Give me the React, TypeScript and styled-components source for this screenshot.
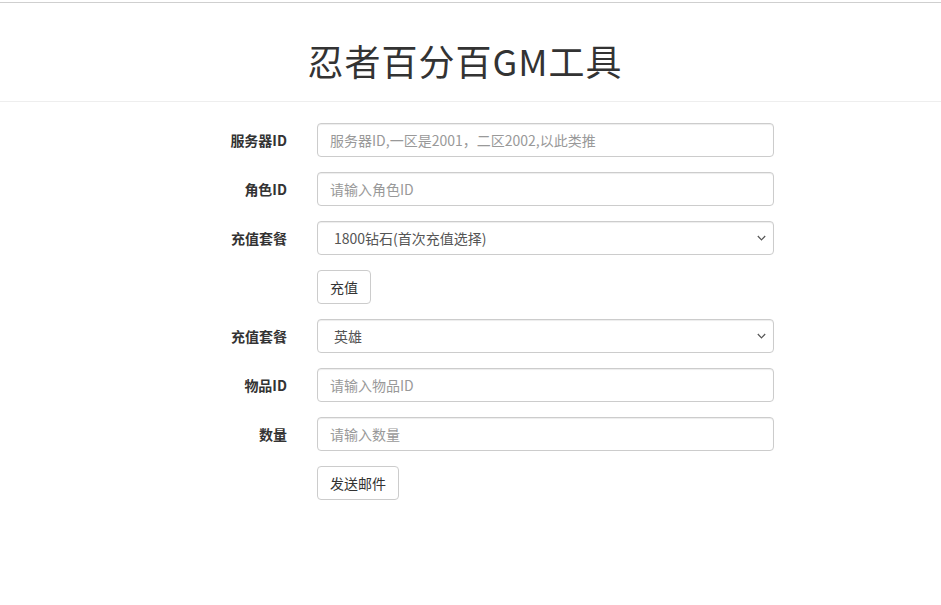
import styled, { createGlobalStyle } from 'styled-components';

const GlobalStyle = createGlobalStyle`
  html, body {
    margin: 0;
    padding: 0;
    background: #fff;
  }
  body {
    font-family: "Helvetica Neue", "Liberation Sans", "Noto Sans CJK SC", sans-serif;
    font-size: 14px;
    line-height: 1.42857;
    color: #333;
  }
  * {
    box-sizing: border-box;
  }
`;

const Page = styled.div`
  padding-top: 2px;
`;

const Header = styled.header`
  height: 100px;
  border-top: 1px solid #cfcfcf;
  border-bottom: 1px solid #eee;
  display: flex;
  justify-content: center;
  padding: 38px 11px 0 0;
`;

const Title = styled.h1`
  margin: 0;
  font-family: "Noto Sans CJK SC", sans-serif;
  font-size: 36px;
  font-weight: 400;
  line-height: 1.1;
  letter-spacing: 1px;
  color: #333;
`;

const Form = styled.form`
  margin: 21px 0 0 115px;
  width: 659px;
`;

const Row = styled.div`
  display: grid;
  grid-template-columns: 172px 457px;
  column-gap: 30px;
  align-items: center;
  margin-bottom: 15px;
`;

const Label = styled.label`
  text-align: right;
  font-family: "Noto Sans CJK SC", sans-serif;
  font-weight: 700;
  font-size: 14px;
  color: #333;
`;

const Field = styled.input`
  grid-column: 2;
  display: block;
  width: 100%;
  height: 34px;
  padding: 6px 12px;
  font-family: "Noto Sans CJK SC", sans-serif;
  font-size: 14px;
  color: #555;
  background: #fff;
  border: 1px solid #ccc;
  border-radius: 4px;
  box-shadow: inset 0 1px 1px rgba(0, 0, 0, 0.075);
  outline: none;

  &::placeholder {
    color: #999;
  }
`;

const chevron =
  "url(\"data:image/svg+xml;utf8,<svg xmlns='http://www.w3.org/2000/svg' width='9' height='6' viewBox='0 0 9 6'><path d='M0.8 1 L4.5 4.8 L8.2 1' fill='none' stroke='%23555' stroke-width='1.2'/></svg>\")";

const Select = styled.select`
  grid-column: 2;
  display: block;
  width: 100%;
  height: 34px;
  padding: 6px 28px 6px 16px;
  font-family: "Noto Sans CJK SC", sans-serif;
  font-size: 14px;
  color: #555;
  background: #fff ${chevron} no-repeat right 7px center;
  border: 1px solid #ccc;
  border-radius: 4px;
  box-shadow: inset 0 1px 1px rgba(0, 0, 0, 0.075);
  outline: none;
  appearance: none;
  -webkit-appearance: none;
`;

const Button = styled.button`
  grid-column: 2;
  justify-self: start;
  height: 34px;
  padding: 6px 12px;
  font-family: "Noto Sans CJK SC", sans-serif;
  font-size: 14px;
  line-height: 1.42857;
  color: #333;
  background: #fff;
  border: 1px solid #ccc;
  border-radius: 4px;
  cursor: pointer;
`;

const App = () => {
  return (
    <Page>
      <GlobalStyle />
      <Header>
        <Title>忍者百分百GM工具</Title>
      </Header>
      <Form onSubmit={(e) => e.preventDefault()}>
        <Row>
          <Label>服务器ID</Label>
          <Field placeholder="服务器ID,一区是2001，二区2002,以此类推" />
        </Row>
        <Row>
          <Label>角色ID</Label>
          <Field placeholder="请输入角色ID" />
        </Row>
        <Row>
          <Label>充值套餐</Label>
          <Select defaultValue="1800">
            <option value="1800">1800钻石(首次充值选择)</option>
          </Select>
        </Row>
        <Row>
          <Button type="button">充值</Button>
        </Row>
        <Row>
          <Label>充值套餐</Label>
          <Select defaultValue="hero">
            <option value="hero">英雄</option>
          </Select>
        </Row>
        <Row>
          <Label>物品ID</Label>
          <Field placeholder="请输入物品ID" />
        </Row>
        <Row>
          <Label>数量</Label>
          <Field placeholder="请输入数量" />
        </Row>
        <Row>
          <Button type="button">发送邮件</Button>
        </Row>
      </Form>
    </Page>
  );
};

export default App;
